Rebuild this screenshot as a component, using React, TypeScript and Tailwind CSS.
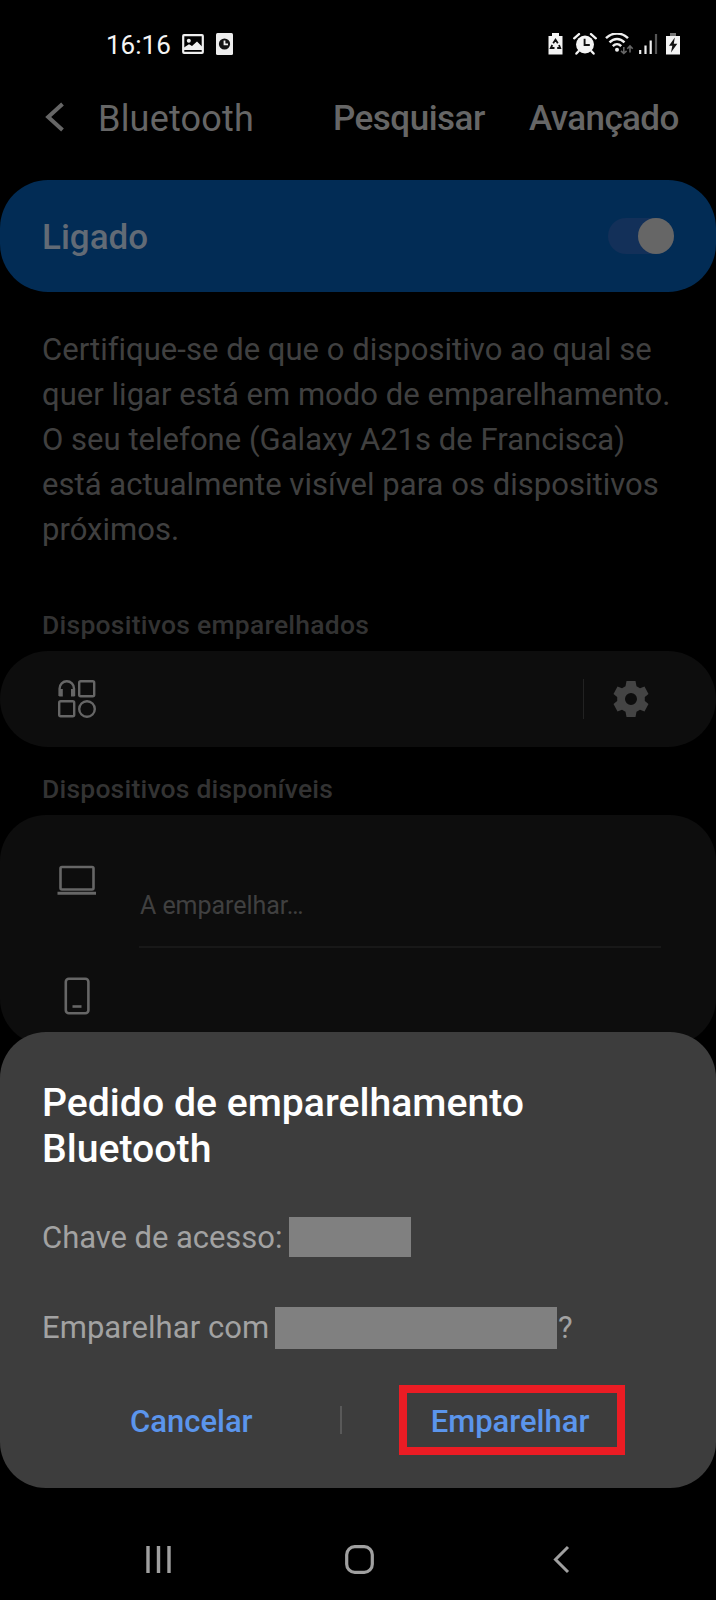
import React from "react";

function StatusBar() {
  return (
    <div className="flex h-[87px] items-start justify-between pl-[106px] pr-9 pt-8">
      <div className="flex">
        <span className="mr-[11px] h-[26px] w-[65px] whitespace-nowrap text-[26px] leading-[26px] text-[#f4f4f4]">16:16</span>
        <svg width="22" height="22" viewBox="0 0 22 22" className="mt-px">
          <rect x="1.2" y="2.2" width="19.6" height="17.6" rx="0.8" fill="none" stroke="#eee" strokeWidth="2.2" />
          <circle cx="6.8" cy="7.8" r="2" fill="#eee" />
          <path d="M2 17V14.5L7 11.2 10 13 15 8.5 20 13.5V17Z" fill="#eee" />
        </svg>
        <svg width="17" height="22" viewBox="0 0 17 22" className="ml-3 mt-px">
          <rect width="17" height="22" rx="1.5" fill="#ededed" />
          <circle cx="8.5" cy="11" r="5.6" fill="#111" />
          <path d="M8.5 7.5V11.3H12" fill="none" stroke="#eee" strokeWidth="1.8" />
        </svg>
      </div>
      <div className="mt-px flex">
        <svg width="15" height="22" viewBox="0 0 15 22">
          <path d="M4 0H11V3H14.5V21.5H0.5V3H4Z" fill="#f4f4f4" />
          <path d="M5.2 10.2 7.5 6.6 9.8 10.2M11 12 12.2 15H9.2M6.5 15H2.8L4.3 12" fill="none" stroke="#111" strokeWidth="1.8" />
        </svg>
        <svg width="24" height="22" viewBox="0 0 24 22" className="ml-[10px] mr-px">
          <circle cx="12" cy="11.5" r="9" fill="#f4f4f4" />
          <path d="M5.5 18.2 3.4 20.6M18.5 18.2 20.6 20.6M1.2 5.3 6 1.1M22.8 5.3 18 1.1" stroke="#f4f4f4" strokeWidth="2.3" strokeLinecap="round" />
          <path d="M11.6 5.8V12H16.8" fill="none" stroke="#111" strokeWidth="1.9" />
        </svg>
        <svg width="29" height="22" viewBox="0 0 29 22" className="ml-[7px]">
          <path d="M1 5.2C7-1 17-1 23 5.2M4.5 9.4C9 4.8 15 4.8 19.5 9.4M7.8 13.1C10.3 10.6 13.7 10.6 16.2 13.1" fill="none" stroke="#eee" strokeWidth="2.4" />
          <circle cx="12" cy="16.8" r="2" fill="#eee" />
          <path d="M18.8 14V20.5M16 17.8 18.8 20.5 21.6 17.8M25 19.5V13M22.3 15.7 25 13 27.7 15.7" fill="none" stroke="#666" strokeWidth="1.6" />
        </svg>
        <svg width="19" height="22" viewBox="0 0 19 22" className="ml-[5px]">
          <path d="M1.2 17V21M6.5 12.5V21M11.7 7.5V21" stroke="#eee" strokeWidth="2.2" />
          <path d="M17 1V21" stroke="#555" strokeWidth="2.2" />
        </svg>
        <svg width="14" height="22" viewBox="0 0 14 22" className="ml-2">
          <path d="M4 0H10V3H4Z" fill="#777" />
          <path d="M0 3H14V21.5H0Z" fill="#f4f4f4" />
          <path d="M8.8 4.5 3 12.8H6.3L5 19.5 11.3 10.8H7.8Z" fill="#111" />
        </svg>
      </div>
    </div>
  );
}

function Header() {
  return (
    <header className="flex h-[64px] items-center text-[#666]">
      <svg width="20" height="30" viewBox="0 0 20 30" className="-mt-[5px] ml-[45px]">
        <path d="M17.5 2 3.2 15 17.5 28" fill="none" stroke="currentColor" strokeWidth="4" />
      </svg>
      <h1 className="ml-[33px] w-[235px] whitespace-nowrap text-[36px] tracking-[0.2px]">Bluetooth</h1>
      <span className="w-[196px] whitespace-nowrap text-[35px] font-medium tracking-[-0.5px]">Pesquisar</span>
      <span className="whitespace-nowrap text-[35px] font-medium tracking-[-0.6px]">Avançado</span>
    </header>
  );
}

function DevicesIcon() {
  return (
    <svg width="40" height="40" viewBox="0 0 40 40" fill="none" stroke="#666" strokeWidth="2.4">
      <path d="M2.6 17V9.5A7.2 7.2 0 0 1 17 9.5V17" />
      <path d="M4 10V17.5M15.8 10V17.5" strokeWidth="3.6" />
      <rect x="22.2" y="2.2" width="15" height="15" rx="1.5" />
      <rect x="2.2" y="22.2" width="15" height="15" rx="1.5" />
      <circle cx="30" cy="30" r="7.8" />
    </svg>
  );
}

function PairingSheet() {
  return (
    <section className="absolute left-0 top-[1032px] flex h-[456px] w-full flex-col rounded-[46px] bg-[#3d3d3d] pl-[42px] pt-[48px]">
      <h2 className="text-[39.2px] font-medium leading-[46px] text-white">
        <span className="block whitespace-nowrap">Pedido de emparelhamento</span>
        <span className="block">Bluetooth</span>
      </h2>
      <div className="mt-[43px] flex h-[44px] items-center text-[31px] text-[#a2a2a2]">
        <span className="w-[247px] whitespace-nowrap pt-[2px] tracking-[-0.05px]">Chave de acesso:</span>
        <span className="h-10 w-[122px] bg-[#808080]" />
      </div>
      <div className="mt-[47px] flex h-[44px] items-center text-[31px] text-[#a2a2a2]">
        <span className="w-[233px] whitespace-nowrap tracking-[0.05px]">Emparelhar com</span>
        <span className="h-[42px] w-[282px] bg-[#808080]" />
        <span className="ml-px">?</span>
      </div>
      <div className="mt-[35px] flex h-[70px] items-center text-[31px] font-medium text-[#5b95ec]">
        <button className="ml-[88px] w-[123px] whitespace-nowrap pt-1 text-left">Cancelar</button>
        <span className="ml-[87px] h-[28px] w-[2px] bg-[#595959]" />
        <button className="ml-[57px] h-[70px] w-[226px] whitespace-nowrap border-8 border-[#eb1c24] pr-1 pt-1 text-center">Emparelhar</button>
      </div>
    </section>
  );
}

function NavBar() {
  return (
    <nav className="absolute left-0 top-[1488px] flex h-28 w-full items-start pt-[56px] text-[#a0a0a0]">
      <svg width="26" height="30" viewBox="0 0 26 30" className="ml-[145px]">
        <path d="M3 2V29M13.5 2V29M24 2V29" stroke="currentColor" strokeWidth="3.4" />
      </svg>
      <svg width="31" height="31" viewBox="0 0 31 31" className="ml-[173px]">
        <rect x="2.7" y="2.7" width="25.6" height="25.6" rx="8" fill="none" stroke="currentColor" strokeWidth="3.2" />
      </svg>
      <svg width="18" height="30" viewBox="0 0 18 30" className="ml-[177px]">
        <path d="M16 3 3.5 15.5 16 28" fill="none" stroke="currentColor" strokeWidth="3" />
      </svg>
    </nav>
  );
}

export default function App() {
  return (
    <main className="relative h-[1600px] w-[716px] overflow-hidden bg-black font-['Roboto',sans-serif]">
      <StatusBar />
      <Header />
      <section className="mt-[29px] flex h-[112px] items-center justify-between rounded-[48px] bg-[#022c55] pl-[42px] pr-[42px]">
        <span className="pt-[5px] text-[35px] font-medium text-[#626b76]">Ligado</span>
        <span className="flex h-9 w-[66px] justify-end rounded-full bg-[#133059]">
          <span className="size-9 rounded-full bg-[#666]" />
        </span>
      </section>
      <p className="ml-[42px] mt-[35px] h-[225px] whitespace-nowrap text-[31px] leading-[45px] tracking-[0.03px] text-[#404040]">
        Certifique-se de que o dispositivo ao qual se<br />
        quer ligar está em modo de emparelhamento.<br />
        O seu telefone (Galaxy A21s de Francisca)<br />
        está actualmente visível para os dispositivos<br />
        próximos.
      </p>
      <h3 className="ml-[42px] mt-[58px] h-[41px] text-[26.5px] font-medium leading-[30px] tracking-[0.25px] text-[#333]">Dispositivos emparelhados</h3>
      <section className="flex h-[96px] items-center rounded-[48px] bg-[#0d0d0d] pl-[57px]">
        <DevicesIcon />
        <span className="ml-[486px] h-10 w-px bg-[#222]" />
        <svg width="36" height="38" viewBox="0 0 36 38" className="ml-[29px]">
          <path fillRule="evenodd" fill="#444" d="M13.5 1H22.5L23.5 6.2 27 8.2 31.5 6.5 35.5 14 31.8 17V21L35.5 24 31.5 31.5 27 29.8 23.5 31.8 22.5 37H13.5L12.5 31.8 9 29.8 4.5 31.5 0.5 24 4.2 21V17L0.5 14 4.5 6.5 9 8.2 12.5 6.2ZM18 13A6 6 0 1 0 18 25A6 6 0 1 0 18 13Z" />
        </svg>
      </section>
      <h3 className="ml-[42px] mt-[27px] h-[41px] text-[26.5px] font-medium leading-[30px] tracking-[0.2px] text-[#333]">Dispositivos disponíveis</h3>
      <section className="h-[230px] rounded-[46px] bg-[#0d0d0d] pl-[57px] pr-[55px]">
        <div className="flex h-[133px]">
          <svg width="40" height="31" viewBox="0 0 40 31" fill="none" stroke="#666" className="mt-[50px]">
            <rect x="3.5" y="2" width="33" height="22.5" rx="1.5" strokeWidth="2.6" />
            <path d="M0.5 28.3H39" strokeWidth="3" />
          </svg>
          <div className="ml-[42px] flex grow items-end border-b-2 border-[#181818] pb-[25px]">
            <span className="ml-px text-[25px] leading-[30px] tracking-[-0.05px] text-[#404040]">A emparelhar…</span>
          </div>
        </div>
        <svg width="26" height="38" viewBox="0 0 26 38" fill="none" stroke="#666" strokeWidth="2.6" className="ml-[7px] mt-[29px]">
          <rect x="1.8" y="1.8" width="22.6" height="34.4" rx="3" />
          <path d="M8.5 29.5H17.5" />
        </svg>
      </section>
      <PairingSheet />
      <NavBar />
    </main>
  );
}
